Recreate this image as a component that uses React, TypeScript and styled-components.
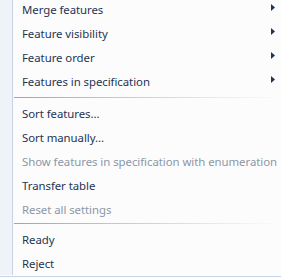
import React from 'react';
import styled, { createGlobalStyle } from 'styled-components';

const GlobalStyle = createGlobalStyle`
  html, body {
    margin: 0;
    padding: 0;
    background: #fcfcfc;
  }
  body {
    font-family: "Segoe UI", "Noto Sans", sans-serif;
  }
`;

type Entry =
  | { kind: 'item'; label: string; submenu?: boolean; disabled?: boolean }
  | { kind: 'separator'; compact?: boolean };

const entries: Entry[] = [
  { kind: 'item', label: 'Merge features', submenu: true },
  { kind: 'item', label: 'Feature visibility', submenu: true },
  { kind: 'item', label: 'Feature order', submenu: true },
  { kind: 'item', label: 'Features in specification', submenu: true },
  { kind: 'separator' },
  { kind: 'item', label: 'Sort features...' },
  { kind: 'item', label: 'Sort manually...' },
  { kind: 'item', label: 'Show features in specification with enumeration', disabled: true },
  { kind: 'item', label: 'Transfer table' },
  { kind: 'item', label: 'Reset all settings', disabled: true },
  { kind: 'separator', compact: true },
  { kind: 'item', label: 'Ready' },
  { kind: 'item', label: 'Reject' },
];

export default function App() {
  return (
    <>
      <GlobalStyle />
      <Menu>
        {entries.map((entry, i) =>
          entry.kind === 'separator' ? (
            <Separator key={i} $compact={entry.compact}>
              <Gutter />
              <SeparatorLine $compact={entry.compact} />
            </Separator>
          ) : (
            <Row key={i}>
              <Gutter />
              <Label $disabled={entry.disabled}>{entry.label}</Label>
              {entry.submenu && (
                <Arrow width="4" height="7" viewBox="0 0 4 7">
                  <path d="M0 0 L4 3.5 L0 7 Z" fill="#1e3554" />
                </Arrow>
              )}
            </Row>
          )
        )}
      </Menu>
    </>
  );
}

const Menu = styled.div`
  display: flex;
  flex-direction: column;
  width: 281px;
  margin-top: -3px;
  padding-bottom: 1px;
  background: #fcfcfc;
  border-bottom: 1px solid #c6d6e8;
  box-sizing: border-box;
`;

const Row = styled.div`
  display: flex;
  align-items: center;
  height: 24px;
`;

const Gutter = styled.div`
  align-self: stretch;
  width: 12px;
  flex-shrink: 0;
  background: #eef2f9;
  border-right: 1px solid #c5d3e7;
`;

const Label = styled.span<{ $disabled?: boolean }>`
  flex: 1;
  padding-left: 9px;
  font-size: 11.4px;
  letter-spacing: -0.05px;
  white-space: nowrap;
  color: ${({ $disabled }) => ($disabled ? '#8c97a6' : '#1e3554')};
`;

const Arrow = styled.svg`
  flex-shrink: 0;
  margin-right: 6px;
  margin-top: -3px;
`;

const Separator = styled.div<{ $compact?: boolean }>`
  display: flex;
  height: ${({ $compact }) => ($compact ? '6px' : '8px')};
`;

const SeparatorLine = styled.div<{ $compact?: boolean }>`
  flex: 1;
  height: 1px;
  margin: ${({ $compact }) => ($compact ? '2px' : '4px')} 0 0 1px;
  background: linear-gradient(to right, #97a6bd, #e6e9ee 75%, #fcfcfc);
`;
